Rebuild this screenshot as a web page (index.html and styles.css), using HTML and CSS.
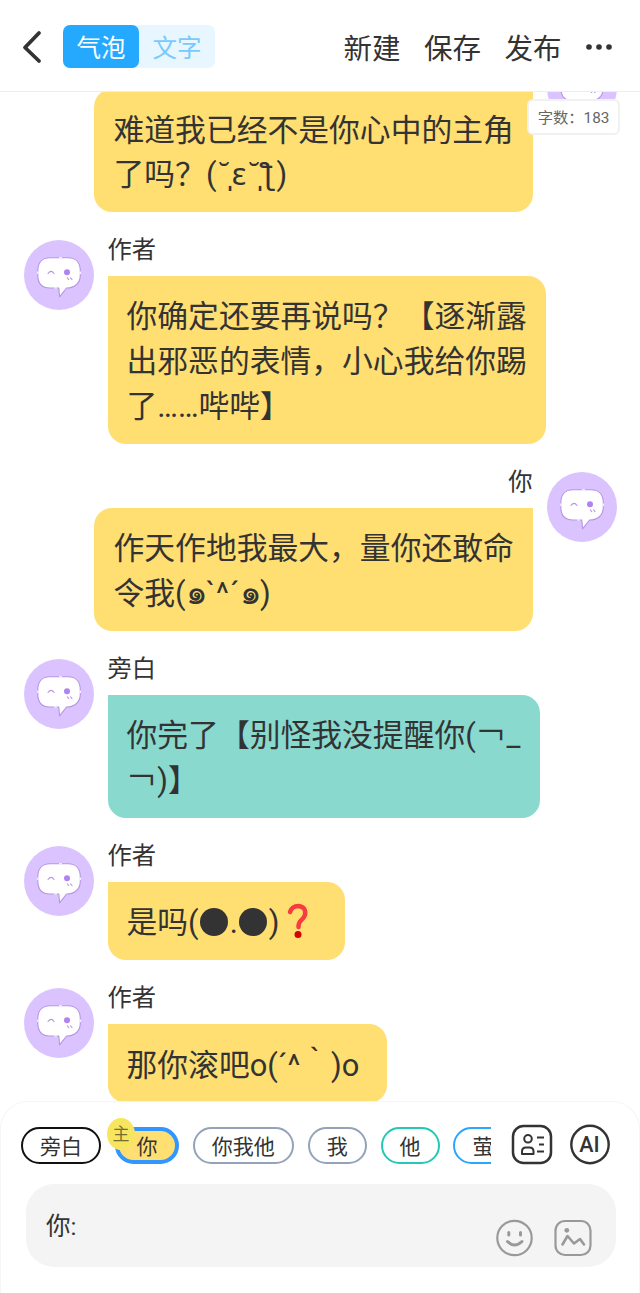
FILE: index.html
```
<!DOCTYPE html>
<html lang="zh-CN">
<head>
<meta charset="utf-8">
<title>气泡</title>
<link rel="stylesheet" href="styles.css">
</head>
<body>
<svg width="0" height="0" class="defs">
  <symbol id="face" viewBox="0 0 70 70">
    <circle cx="35" cy="35" r="35" fill="#dac3ff"/>
    <path d="M26 17.800H44C52 17.800 56.300 23 56.300 31V35C56.300 43 51 48 42.500 48L35.600 56.800L34.800 48H26C18 48 13.800 43 13.800 35V31C13.800 23 18 17.800 26 17.800Z" fill="#fff" stroke="#b795e3" stroke-width="1.100" stroke-linejoin="round"/>
    <path d="M35 17.800h3M13.800 31.500v2.500M56.300 31.500v2.500M30 48h3" stroke="#fff" stroke-width="1.100"/>
    <path d="M24 33.500q3.200-4.200 6 0" fill="none" stroke="#b795e3" stroke-width="1.100" stroke-linecap="round"/>
    <circle cx="43" cy="32.300" r="3" fill="#b083f0"/>
    <path d="M43 37.500l2 2.300M46.300 37.500l2 2.300" stroke="#b795e3" stroke-width="1.100"/>
  </symbol>
</svg>
<header class="topbar">
  <svg class="back" width="20" height="34" viewBox="0 0 20 34"><path d="M17 3L3 17.500 17 31" fill="none" stroke="#333" stroke-width="3.800" stroke-linecap="round" stroke-linejoin="round"/></svg>
  <div class="tabs"><span class="tab active">气泡</span><span class="tab">文字</span></div>
  <nav class="actions"><span>新建</span><span>保存</span><span>发布</span>
    <svg width="28" height="8" viewBox="0 0 28 8" fill="#333"><circle cx="4" cy="4" r="2.800"/><circle cx="14" cy="4" r="2.800"/><circle cx="24" cy="4" r="2.800"/></svg>
  </nav>
</header>
<div class="count">字数：183</div>
<main class="chat">
  <section class="msg mine">
    <svg class="avatar"><use href="#face"/></svg>
    <div class="content"><div class="name"></div><div class="bubble wide">难道我已经不是你心中的主角<br>了吗？(<span class="kao">˘̩</span><span class="kao">ε</span><span class="kao">˘̩</span><span class="kao loop">ƪ</span>)</div></div>
  </section>
  <section class="msg">
    <svg class="avatar"><use href="#face"/></svg>
    <div class="content"><div class="name">作者</div><div class="bubble wide tall">你确定还要再说吗？【逐渐露<br>出邪恶的表情，小心我给你踢<br>了……哔哔】</div></div>
  </section>
  <section class="msg mine">
    <svg class="avatar"><use href="#face"/></svg>
    <div class="content"><div class="name">你</div><div class="bubble wide">作天作地我最大，量你还敢命<br>令我(<span class="curl">๑</span><span class="brow">`^´</span><span class="curl">๑</span>)</div></div>
  </section>
  <section class="msg">
    <svg class="avatar"><use href="#face"/></svg>
    <div class="content"><div class="name">旁白</div><div class="bubble narrator">你完了【别怪我没提醒你(￢_<br>￢)】</div></div>
  </section>
  <section class="msg">
    <svg class="avatar"><use href="#face"/></svg>
    <div class="content"><div class="name">作者</div><div class="bubble short">是吗(<i class="dot"></i>.<i class="dot"></i>)<svg class="ask" width="36" height="36" viewBox="0 0 36 36"><path d="M10 9Q12 3 18.500 3Q26.500 4 25 12Q24 15 20.500 18Q18.500 20 18.500 24" fill="none" stroke="#f83b40" stroke-width="4.500" stroke-linecap="round"/><circle cx="18" cy="31.500" r="3.500" fill="#d50000"/></svg></div></div>
  </section>
  <section class="msg">
    <svg class="avatar"><use href="#face"/></svg>
    <div class="content"><div class="name">作者</div><div class="bubble last">那你滚吧o(´^｀)o</div></div>
  </section>
</main>
<footer class="composer">
  <div class="roles">
    <div class="chips">
      <span class="chip black">旁白</span>
      <span class="chip selected">你<b class="main">主</b></span>
      <span class="chip three">你我他</span>
      <span class="chip">我</span>
      <span class="chip green">他</span>
      <span class="chip blue">萤</span>
    </div>
    <svg class="tool" width="42" height="42" viewBox="0 0 42 42" fill="none" stroke="#333" stroke-width="2"><rect x="2" y="2" width="38" height="37" rx="10.500" stroke-width="2.500"/><circle cx="17" cy="14.800" r="3.800"/><path d="M11 30V27.500Q11 23.500 15 23.500H18.500Q22.500 23.500 22.500 27.500V30Z" stroke-linejoin="round"/><path d="M26 13.500h7M28 20.500h5M26 27.500h7"/></svg>
    <svg class="tool ai" width="42" height="42" viewBox="0 0 42 42"><circle cx="21" cy="20.500" r="18.700" fill="none" stroke="#333" stroke-width="2.400"/><text x="20.500" y="28" text-anchor="middle">AI</text></svg>
  </div>
  <div class="input"><span>你:</span>
    <svg width="38" height="38" viewBox="0 0 38 38" fill="none" stroke="#999" stroke-linecap="round"><circle cx="18.500" cy="19" r="17.200" stroke-width="2.200"/><path d="M12.800 13.500v2.500M24.500 13.500v2.500" stroke-width="3"/><path d="M11.500 22.500q7 7 14.500 0" stroke-width="3"/></svg>
    <svg width="38" height="38" viewBox="0 0 38 38" fill="none" stroke="#999" stroke-linecap="round"><rect x="1.500" y="2" width="35" height="34" rx="9.500" stroke-width="2.200"/><circle cx="12.800" cy="11.300" r="2.400" fill="#999" stroke="none"/><path d="M8.500 25.500L13.500 17 20 24.500 26 20 30 25.500" stroke-width="2.600" stroke-linejoin="round"/></svg>
  </div>
</footer>
</body>
</html>
```
FILE: styles.css
```
* { box-sizing: border-box; }
body {
  margin: 0;
  width: 640px;
  height: 1293px;
  display: flex;
  flex-direction: column;
  overflow: hidden;
  background: #fff;
  color: #333;
  font-family: Roboto, "Noto Sans CJK SC", sans-serif;
}
.defs { position: absolute; }
.topbar {
  flex: none;
  height: 92px;
  padding: 2px 27px 0 21.500px;
  border-bottom: 1px solid #eee;
  display: flex;
  align-items: center;
}
.back { margin-right: 21.500px; }
.tabs {
  display: flex;
  width: 152px;
  height: 43px;
  border-radius: 7px;
  background: #e8f6ff;
}
.tab {
  flex: 1;
  padding-top: 2px;
  border-radius: 7px;
  color: #78cafc;
  font-size: 24.500px;
  line-height: 43px;
  text-align: center;
}
.active { background: #25a9ff; color: #fff; }
.actions {
  margin-left: auto;
  display: flex;
  align-items: center;
  gap: 23.500px;
  font-size: 28.500px;
}
.count {
  position: absolute;
  left: 527px;
  top: 99px;
  width: 93px;
  height: 36px;
  border: 2px solid #f1f1f1;
  border-radius: 6px;
  background: #fff;
  color: #666;
  font-size: 15.300px;
  line-height: 34px;
  text-align: center;
  white-space: nowrap;
}
.chat {
  height: 1009px;
  flex: none;
  overflow: hidden;
  padding: 0 23.500px 0 23.500px;
}
.msg {
  display: flex;
  gap: 14px;
  margin-bottom: 27.800px;
}
.msg:first-child { margin-top: -39px; }
.mine { flex-direction: row-reverse; }
.avatar { width: 70px; height: 70px; flex: none; }
.content { display: flex; flex-direction: column; align-items: flex-start; }
.mine .content { align-items: flex-end; }
.name {
  height: 36px;
  font-size: 24.300px;
  line-height: 20px;
}
.bubble {
  height: 123.200px;
  padding: 19.500px 19px 0;
  border-radius: 0 18px 18px 18px;
  background: #ffde72;
  font-size: 30.800px;
  line-height: 44.600px;
  white-space: nowrap;
}
.mine .bubble { padding-left: 19.500px; border-radius: 18px 0 18px 18px; }
.wide { width: 438.500px; }
.tall { height: 167.800px; }
.narrator { width: 432px; background: #89d9cf; }
.short { width: 237px; height: 78.800px; }
.last { width: 279px; height: 78.800px; }
.kao {
  display: inline-block;
  width: 15px;
  font-family: "Noto Sans", sans-serif;
  line-height: 1;
  text-align: center;
}
.loop { font-family: "DejaVu Sans", sans-serif; }
.curl { display: inline-block; width: 20px; font-size: 34px; line-height: 1; text-align: center; }
.brow { letter-spacing: 0.800px; }
.dot {
  display: inline-block;
  width: 28px;
  height: 28px;
  margin: 0 1.500px;
  border-radius: 50%;
  background: #333;
  vertical-align: -3px;
}
.ask { margin: -4px 0 0; vertical-align: -6px; }
.composer {
  position: relative;
  height: 192px;
  flex: none;
  border: 1px solid #f5f5f5;
  border-bottom: 0;
  border-radius: 28px 28px 0 0;
  background: #fff;
}
.roles {
  display: flex;
  height: 82px;
  padding: 16px 28px 0 20px;
}
.chips {
  display: flex;
  gap: 13.900px;
  width: 470px;
  flex: none;
  padding-top: 10px;
  overflow: hidden;
  margin-top: -1px;
}
.chip {
  position: relative;
  flex: none;
  width: 59px;
  height: 37px;
  border: 2px solid #94a3ba;
  border-radius: 19px;
  font-size: 21px;
  line-height: 36px;
  text-align: center;
}
.black { width: 80px; border-color: #111; }
.selected { width: 64px; border: 4px solid #3196ff; background: #ffde72; line-height: 32px; }
.three { width: 101px; }
.green { border-color: #22c9b5; }
.blue { border-color: #2ba6ff; }
.main {
  position: absolute;
  left: -12px;
  top: -13px;
  width: 28px;
  height: 32px;
  border-radius: 50%;
  background: #f8e55f;
  color: #756e30;
  font-size: 17px;
  font-weight: 400;
  line-height: 33px;
}
.tool { flex: none; margin-left: 20px; margin-top: 6px; }
.ai { margin-left: 15.500px; }
.ai text { font: 500 21.500px Roboto; fill: #333; }
.input {
  display: flex;
  align-items: flex-end;
  gap: 20px;
  width: 590px;
  height: 83px;
  margin-left: 25px;
  padding: 0 24px 10px 20px;
  border-radius: 28px;
  background: #f4f4f4;
  font-size: 24.500px;
}
.input span { margin-right: auto; line-height: 36px; padding-bottom: 12px; }
```
